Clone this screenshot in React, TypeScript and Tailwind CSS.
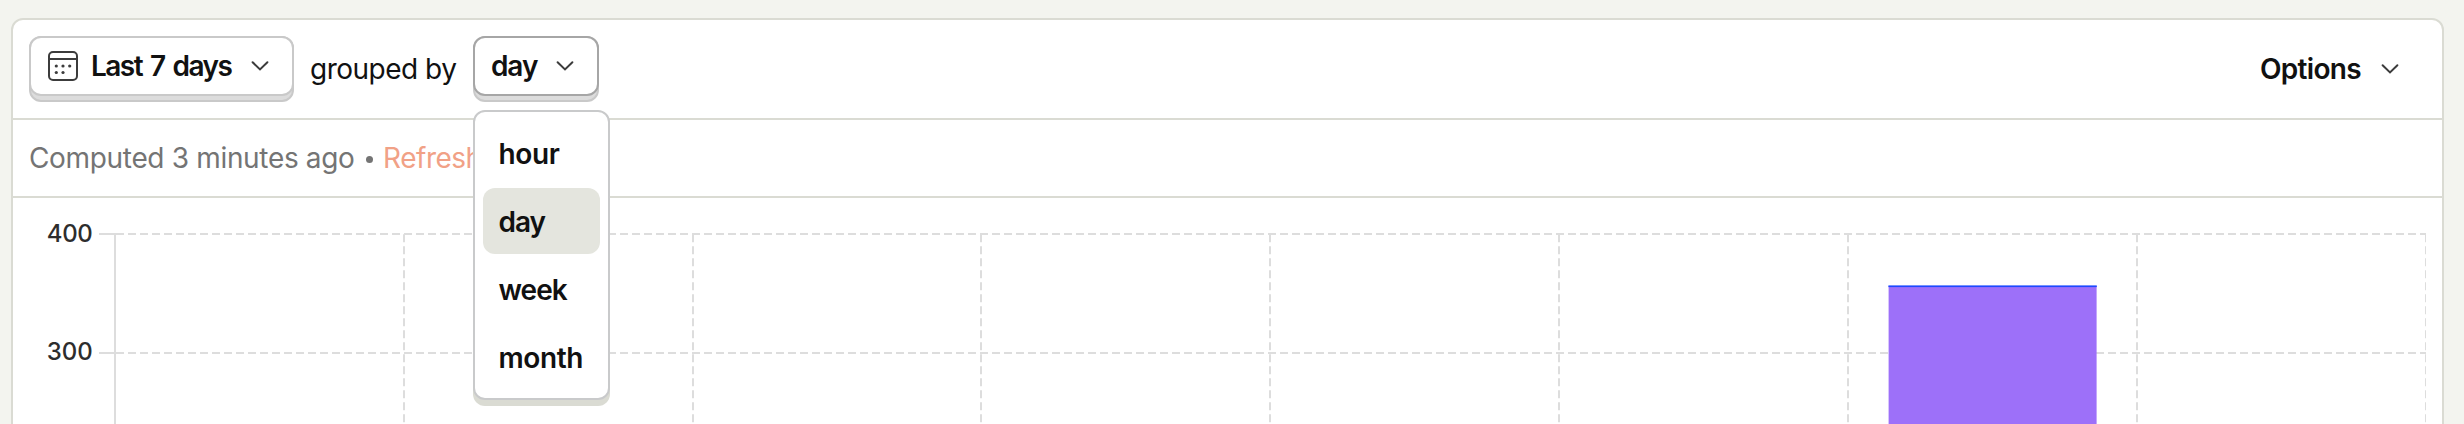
import React from "react";

const X_LINES = [404, 693, 981, 1270, 1559, 1848, 2137, 2426];

function Chevron() {
  return (
    <svg width="18" height="12" viewBox="0 0 18 12" fill="none" className="shrink-0">
      <path d="M1.6 2.2 9 9.4l7.4-7.2" stroke="#3c3c3c" strokeWidth="2" strokeLinecap="round" />
    </svg>
  );
}

function CalendarIcon() {
  return (
    <svg width="30" height="30" viewBox="0 0 30 30" fill="none" className="shrink-0">
      <rect x="1" y="1" width="28" height="28" rx="4" stroke="#3c3c3c" strokeWidth="2" />
      <path d="M1 8h28" stroke="#3c3c3c" strokeWidth="2" />
      <g fill="#3c3c3c">
        <circle cx="8.3" cy="15" r="1.6" />
        <circle cx="15" cy="15" r="1.6" />
        <circle cx="21.7" cy="15" r="1.6" />
        <circle cx="8.3" cy="21.5" r="1.6" />
        <circle cx="15" cy="21.5" r="1.6" />
      </g>
    </svg>
  );
}

function Toolbar() {
  return (
    <div className="flex h-[100px] shrink-0 items-start border-b-2 border-[#dadbd3] px-4 pt-4">
      <button className="h-[66px] w-[265px] rounded-xl border-2 border-[#c9c9c9] bg-[#dcdcdc]">
        <span className="-mx-0.5 -mt-[6.5px] flex h-[60px] items-center rounded-xl border-2 border-[#c9c9c9] bg-white pl-[17px]">
          <CalendarIcon />
          <span className="ml-[13px] w-[160px] whitespace-nowrap pt-px text-left text-[28px] font-semibold tracking-[-1.55px] [word-spacing:2.5px]">Last 7 days</span>
          <Chevron />
        </span>
      </button>
      <span className="ml-4 mt-4 w-[163px] whitespace-nowrap text-[28px] leading-[34px] tracking-[-0.5px]">grouped by</span>
      <div className="relative">
        <button className="h-[66px] w-[126px] rounded-xl border-2 border-[#c9c9c9] bg-[#dcdcdc]">
          <span className="-mx-0.5 -mt-[6.5px] flex h-[60px] items-center rounded-xl border-2 border-[#a6a6a6] bg-white pl-4">
            <span className="w-[65px] pt-px text-left text-[28px] font-semibold tracking-[-1.1px]">day</span>
            <Chevron />
          </span>
        </button>
        <Menu />
      </div>
      <button className="ml-auto mr-[27.5px] mt-4 flex items-center">
        <span className="w-[120.5px] text-left text-[28px] font-semibold leading-[34px] tracking-[-0.7px]">Options</span>
        <Chevron />
      </button>
    </div>
  );
}

function Menu() {
  return (
    <ul className="absolute left-0 top-[74px] z-10 flex h-[290px] w-[137px] flex-col gap-0.5 rounded-xl border-2 border-[#c9cacb] bg-white p-2 text-[28px] font-semibold shadow-[0_6px_0_#dadbd3]">
      <li className="flex h-[66px] items-center rounded-xl px-[15.5px] pt-px tracking-[-0.4px]">hour</li>
      <li className="flex h-[66px] items-center rounded-xl bg-[#e4e5de] px-[15.5px] pt-px tracking-[-1px]">day</li>
      <li className="flex h-[66px] items-center rounded-xl px-[15.5px] pt-px tracking-[-1px]">week</li>
      <li className="flex h-[66px] items-center rounded-xl px-[15.5px] pt-px tracking-[-0.4px]">month</li>
    </ul>
  );
}

function Chart() {
  return (
    <svg width="2429" height="226" viewBox="13 198 2429 226" className="block shrink-0">
      <g stroke="#dddddd" strokeWidth="2">
        <path d="M116 234H2426M116 353H2426" strokeDasharray="8 4" />
        {X_LINES.map((x) => (
          <path key={x} d={`M${x} 234.33V424`} strokeDasharray="8 4" />
        ))}
        <path d="M99 234H116M99 353H116M115 234V424" />
      </g>
      <rect x="2426" y="230" width="4" height="194" fill="white" />
      <rect x="1888.6" y="286" width="208" height="140" fill="#9d70f9" />
      <rect x="1888.4" y="285.4" width="208.4" height="1.7" fill="#1d4aff" />
      <g fill="#2d2d2d" fontSize="24" fontWeight="550" textAnchor="end" className="font-['Inter',sans-serif]">
        <text x="92.8" y="242" textLength="46">400</text>
        <text x="92.8" y="360" textLength="46">300</text>
      </g>
    </svg>
  );
}

export default function App() {
  return (
    <div className="h-[424px] w-[2464px] overflow-hidden bg-[#f3f4ef] pl-[11px] pt-[18px] font-['Inter',sans-serif] text-[#111111]">
      <main className="flex h-[460px] w-[2433px] flex-col rounded-xl border-2 border-[#dadbd3] bg-white">
        <Toolbar />
        <div className="flex h-[78px] shrink-0 items-center border-b-2 border-[#dadbd3] px-4 text-[28px] tracking-[-0.33px] text-[#747474]">
          <span>Computed 3 minutes ago</span>
          <span className="ml-[11.5px] mr-2.5 mt-0.5 size-[7px] rounded-full bg-[#747474]" />
          <span className="tracking-[-0.5px] text-[#f1a186]">Refresh</span>
        </div>
        <Chart />
      </main>
    </div>
  );
}
